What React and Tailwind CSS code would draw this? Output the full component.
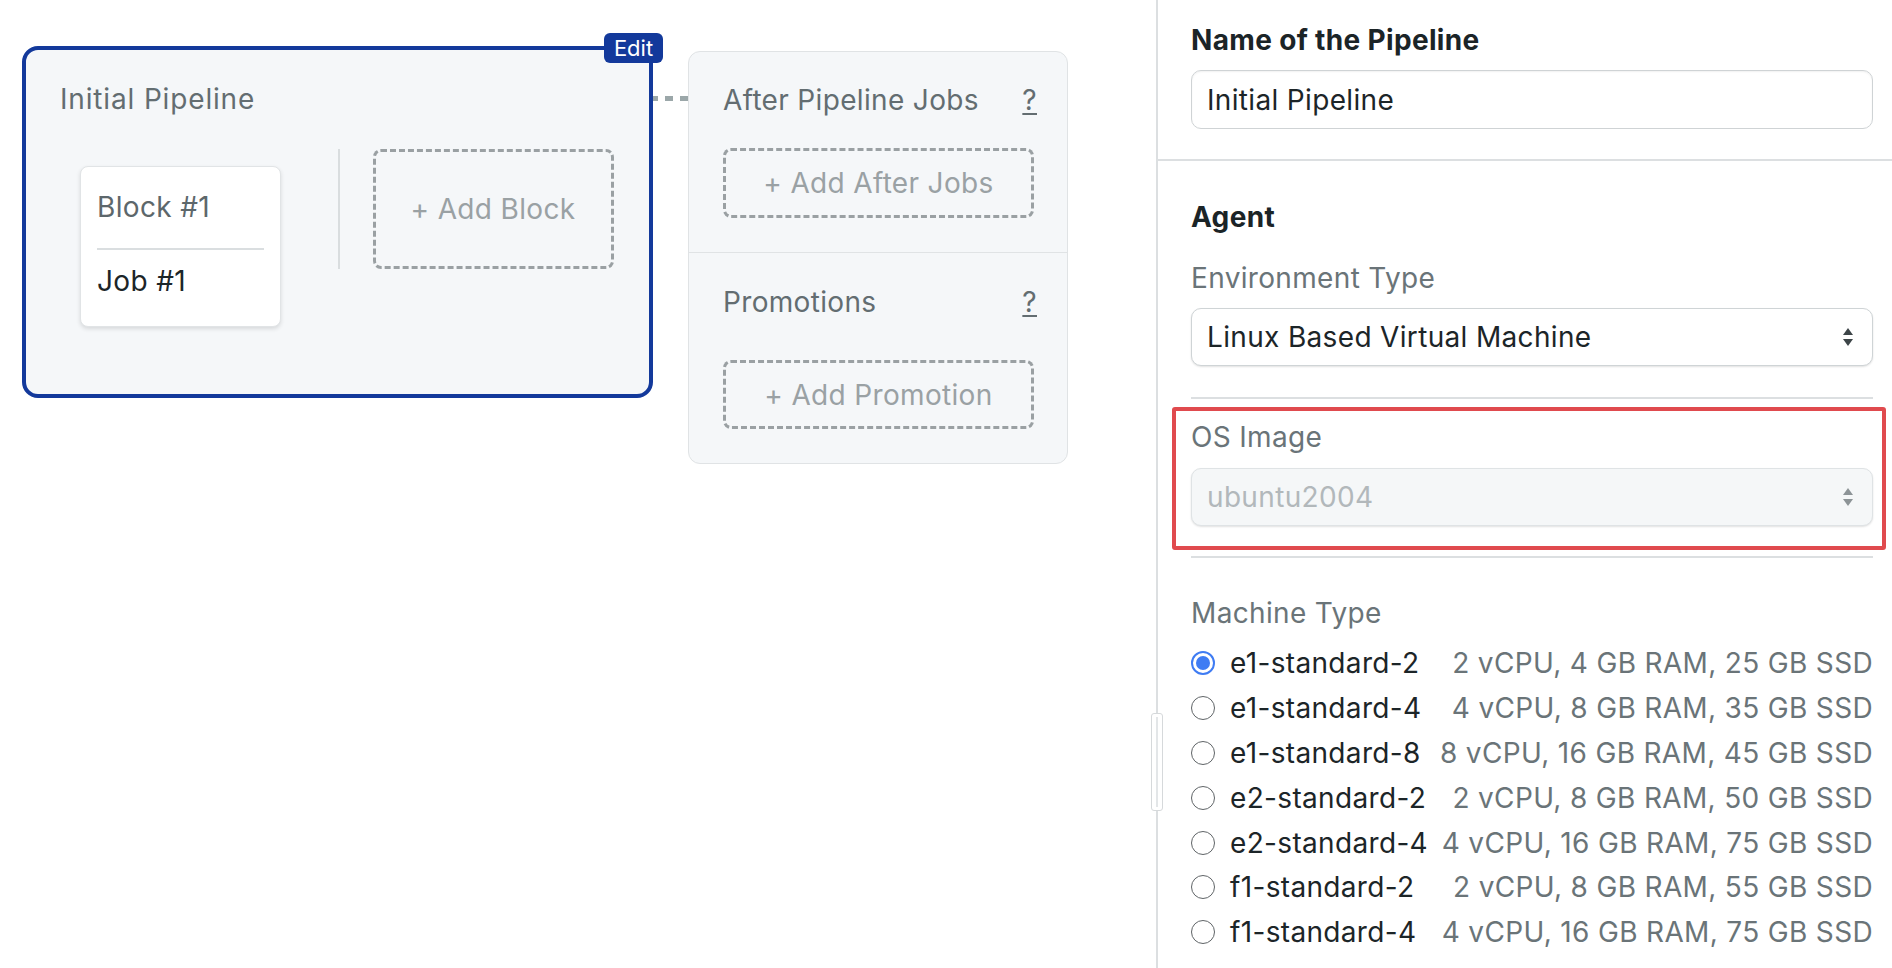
import { useState } from 'react';

const machines = [
    { name: 'e1-standard-2', spec: '2 vCPU, 4 GB RAM, 25 GB SSD' },
    { name: 'e1-standard-4', spec: '4 vCPU, 8 GB RAM, 35 GB SSD' },
    { name: 'e1-standard-8', spec: '8 vCPU, 16 GB RAM, 45 GB SSD' },
    { name: 'e2-standard-2', spec: '2 vCPU, 8 GB RAM, 50 GB SSD' },
    { name: 'e2-standard-4', spec: '4 vCPU, 16 GB RAM, 75 GB SSD' },
    { name: 'f1-standard-2', spec: '2 vCPU, 8 GB RAM, 55 GB SSD' },
    { name: 'f1-standard-4', spec: '4 vCPU, 16 GB RAM, 75 GB SSD' },
];

function SelectArrows({ muted }) {
    return (
        <svg width="12" height="22" viewBox="0 0 12 22" className={muted ? 'text-[#8d9497]' : 'text-[#3d4548]'}>
            <path d="M6 2 L11 9 L1 9 Z" fill="currentColor" />
            <path d="M6 20 L11 13 L1 13 Z" fill="currentColor" />
        </svg>
    );
}

function Select({ value, disabled }) {
    return (
        <div
            className={
                'flex h-[58px] items-center justify-between rounded-[10px] border pl-[15px] pr-[18px] shadow-[0_1px_2px_rgba(0,0,0,0.12)] ' +
                (disabled ? 'border-[#dfe3e5] bg-[#f5f7f8] text-[#b2b8bb]' : 'border-[#cfd4d6] bg-white text-[#1c2528]')
            }
        >
            <span>{value}</span>
            <SelectArrows muted={disabled} />
        </div>
    );
}

function Radio({ checked }) {
    if (checked) {
        return (
            <span className="flex h-[24px] w-[24px] shrink-0 items-center justify-center rounded-full border-[2px] border-[#3f7cf3] bg-white">
                <span className="h-[14px] w-[14px] rounded-full bg-[#3f7cf3]" />
            </span>
        );
    }
    return <span className="h-[24px] w-[24px] shrink-0 rounded-full border-[1.5px] border-[#5f6467] bg-white" />;
}

function DashedButton({ label, className }) {
    return (
        <div
            className={
                'flex items-center justify-center rounded-[8px] border-[3px] border-dashed border-[#9aa0a3] text-[#9aa1a4] ' +
                className
            }
        >
            {label}
        </div>
    );
}

export default function App() {
    const [machine, setMachine] = useState('e1-standard-2');

    return (
        <div className="flex h-[968px] w-full overflow-hidden bg-white font-['Inter','Noto_Sans',sans-serif] text-[28px] leading-[32px] tracking-[0.012em]">
            {/* Workflow canvas */}
            <div className="flex flex-1 items-start pl-[22px] pt-[46px]">
                {/* Pipeline */}
                <div className="relative h-[352px] w-[631px] shrink-0 rounded-[16px] border-[4px] border-[#13399b] bg-[#f5f7f9] pl-[34px] pt-[33px]">
                    <span className="absolute right-[-14px] top-[-17px] flex h-[30px] w-[59px] items-center justify-center rounded-[6px] bg-[#13399b] text-[22px] leading-none tracking-normal text-white">
                        Edit
                    </span>
                    <div className="text-[#636d71] tracking-[0.03em]">Initial Pipeline</div>
                    <div className="mt-[34px] flex items-start">
                        <div className="ml-[20px] mt-[17px] h-[161px] w-[201px] shrink-0 rounded-[8px] border border-[#e1e4e6] bg-white shadow-[0_2px_4px_rgba(0,0,0,0.12)]">
                            <div className="px-[16px] pt-[24px] text-[#5d676b]">Block #1</div>
                            <div className="mx-[16px] mt-[25px] h-[2px] bg-[#dadee0]" />
                            <div className="mt-[15px] px-[16px] text-[#1c2528]">Job #1</div>
                        </div>
                        <div className="ml-[57px] h-[120px] w-[1.5px] shrink-0 bg-[#d9dddf]" />
                        <DashedButton label="+ Add Block" className="ml-[33px] h-[120px] w-[241px] shrink-0" />
                    </div>
                </div>

                {/* Connector */}
                <div className="relative z-10 mt-[50px] flex w-[35px] shrink-0 gap-[7px]">
                    <span className="h-[5px] w-[5px] bg-[#9ba7a9]" />
                    <span className="h-[5px] w-[9px] bg-[#9ba7a9]" />
                    <span className="h-[5px] w-[9px] bg-[#9ba7a9]" />
                </div>

                {/* After pipeline + promotions */}
                <div className="mt-[5px] w-[380px] shrink-0 rounded-[12px] border border-[#e0e3e5] bg-[#f5f7f9]">
                    <div className="border-b-[1.5px] border-[#e0e3e5] pb-[34px] pl-[34px] pr-[30px] pt-[32px]">
                        <div className="flex justify-between">
                            <span className="text-[#636d71]">After Pipeline Jobs</span>
                            <span className="text-[#636d71] underline underline-offset-[3px]">?</span>
                        </div>
                        <DashedButton label="+ Add After Jobs" className="mt-[32px] h-[70px] w-[311px]" />
                    </div>
                    <div className="pb-[34px] pl-[34px] pr-[30px] pt-[33px]">
                        <div className="flex justify-between">
                            <span className="text-[#636d71]">Promotions</span>
                            <span className="text-[#636d71] underline underline-offset-[3px]">?</span>
                        </div>
                        <DashedButton label="+ Add Promotion" className="mt-[42px] h-[69px] w-[311px]" />
                    </div>
                </div>
            </div>

            {/* Settings panel */}
            <div className="relative w-[736px] shrink-0 border-l-[2px] border-[#dcdfe1]">
                <span className="absolute left-[-7px] top-[713px] flex h-[98px] w-[12px] justify-center rounded-[3px] border border-[#d6d9db] bg-white py-[3px]">
                    <span className="w-[2px] bg-[#e3e6e8]" />
                </span>

                <div className="border-b-[2px] border-[#dcdfe1] pb-[30px] pl-[33px] pr-[19px] pt-[24px]">
                    <div className="font-bold text-[#1b2427]">Name of the Pipeline</div>
                    <div className="mt-[14px] flex h-[59px] items-center rounded-[10px] border-[1.5px] border-[#cfd3d5] px-[15px] text-[#1c2528] shadow-[inset_0_1px_2px_rgba(0,0,0,0.06)]">
                        Initial Pipeline
                    </div>
                </div>

                <div className="pl-[33px] pr-[19px] pt-[40px]">
                    <div className="font-bold text-[#1b2427]">Agent</div>
                    <div className="mt-[29px] text-[#6a7478]">Environment Type</div>
                    <div className="mt-[14px]">
                        <Select value="Linux Based Virtual Machine" />
                    </div>
                    <div className="mt-[31px] h-[2px] bg-[#dcdfe1]" />

                    <div className="-ml-[19px] -mr-[13px] mt-[8px] rounded-[3px] border-[4px] border-[#e04a4e] pb-[20px] pl-[15px] pr-[9px] pt-[10px]">
                        <div className="text-[#6a7478]">OS Image</div>
                        <div className="mt-[15px]">
                            <Select value="ubuntu2004" disabled />
                        </div>
                    </div>
                    <div className="mt-[6px] h-[2px] bg-[#dcdfe1]" />

                    <div className="mt-[39px] text-[#6a7478]">Machine Type</div>
                    <div className="mt-[12px] flex flex-col">
                        {machines.map((m) => (
                            <label
                                key={m.name}
                                onClick={() => setMachine(m.name)}
                                className="flex h-[44.8px] cursor-pointer items-center"
                            >
                                <Radio checked={machine === m.name} />
                                <span className="ml-[15px] text-[#1c2528]">{m.name}</span>
                                <span className="ml-auto text-[#6a7478]">{m.spec}</span>
                            </label>
                        ))}
                    </div>
                </div>
            </div>
        </div>
    );
}
